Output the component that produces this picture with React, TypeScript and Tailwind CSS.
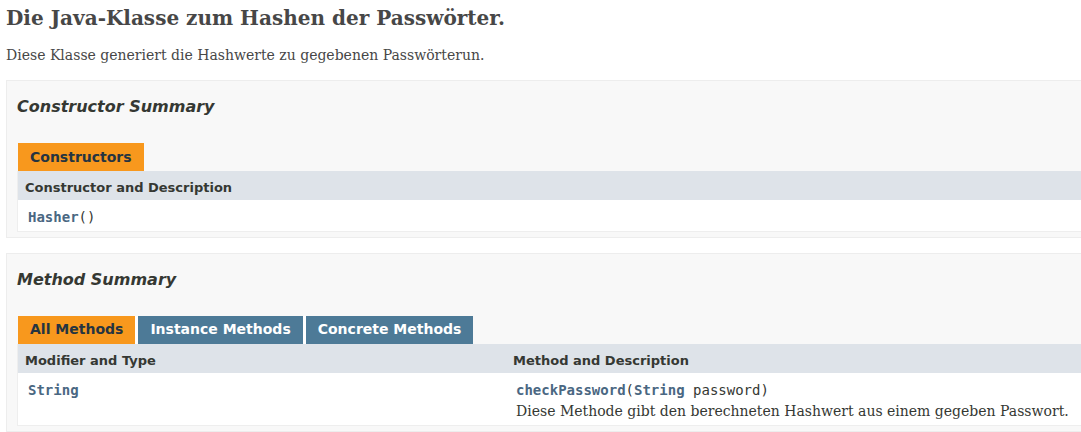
import React from 'react';

const sans = "font-['DejaVu_Sans',_'Liberation_Sans',_sans-serif]";
const serif = "font-['DejaVu_Serif',_'Liberation_Serif',_serif]";
const mono = "font-['DejaVu_Sans_Mono',_'Liberation_Mono',_monospace]";

const Link: React.FC<{ children: React.ReactNode }> = ({ children }) => (
  <span className="font-bold text-[#4a6782]">{children}</span>
);

const Tab: React.FC<{ label: string; active?: boolean; gap?: boolean }> = ({ label, active, gap }) => (
  <div
    className={`h-[28px] flex items-center px-[12px] text-[14px] font-bold ${
      active ? 'bg-[#f8981d] text-[#253441]' : 'bg-[#4d7a97] text-white'
    } ${gap ? 'border-r-[3px] border-white box-content' : ''}`}
  >
    {label}
  </div>
);

const Panel: React.FC<{ title: string; children: React.ReactNode }> = ({ title, children }) => (
  <div className="border border-[#ededed] bg-[#f8f8f8] pl-[10px] pr-[20px] pb-[5px]">
    <h3 className={`pt-[16px] mb-[26px] text-[16px] leading-[20px] font-bold italic text-[#353833] ${sans}`}>
      {title}
    </h3>
    {children}
  </div>
);

export default function App() {
  return (
    <div className="w-[1081px] overflow-hidden bg-white">
      <div className={`w-[1130px] pl-[6px] text-[#353833] ${sans}`}>
        <h2 className={`pt-[6px] text-[20px] leading-[24px] font-bold text-[#474747] ${serif}`}>
          Die Java-Klasse zum Hashen der Passwörter.
        </h2>
        <p className={`mt-[15px] text-[14px] leading-[20px] text-[#474747] ${serif}`}>
          Diese Klasse generiert die Hashwerte zu gegebenen Passwörterun.
        </p>

        <div className="mt-[15px] flex flex-col gap-[15px]">
          <Panel title="Constructor Summary">
            <div className="flex pl-px">
              <Tab label="Constructors" active />
            </div>
            <div className="border-x border-b border-[#eeeeee]">
              <div className="bg-[#dee3e9] pl-[7px] pt-[8px] pb-[3px] text-[13px] leading-[18px] font-bold">
                Constructor and Description
              </div>
              <div className={`bg-white pl-[10px] pt-[8px] pb-[3px] text-[14px] leading-[19.6px] ${mono}`}>
                <Link>Hasher</Link>()
              </div>
            </div>
          </Panel>

          <Panel title="Method Summary">
            <div className="flex pl-px">
              <Tab label="All Methods" active gap />
              <Tab label="Instance Methods" gap />
              <Tab label="Concrete Methods" />
            </div>
            <div className="border-x border-b border-[#eeeeee]">
              <div className="flex bg-[#dee3e9] pt-[8px] pb-[3px] text-[13px] leading-[18px] font-bold">
                <div className="w-[488px] pl-[7px]">Modifier and Type</div>
                <div className="pl-[7px]">Method and Description</div>
              </div>
              <div className="flex bg-white pt-[8px] pb-[3px] text-[14px] leading-[19.6px]">
                <div className={`w-[488px] pl-[10px] ${mono}`}>
                  <Link>String</Link>
                </div>
                <div className="pl-[10px]">
                  <div className={mono}>
                    <Link>checkPassword</Link>(<Link>String</Link> password)
                  </div>
                  <div className={`mt-[2px] text-[#353833] ${serif}`}>
                    Diese Methode gibt den berechneten Hashwert aus einem gegeben Passwort.
                  </div>
                </div>
              </div>
            </div>
          </Panel>
        </div>
      </div>
    </div>
  );
}
